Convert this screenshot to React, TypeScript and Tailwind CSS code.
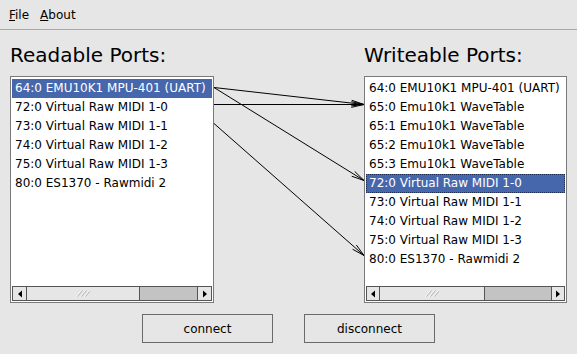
import React from 'react'

const readable = [
  '64:0 EMU10K1 MPU-401 (UART)',
  '72:0 Virtual Raw MIDI 1-0',
  '73:0 Virtual Raw MIDI 1-1',
  '74:0 Virtual Raw MIDI 1-2',
  '75:0 Virtual Raw MIDI 1-3',
  '80:0 ES1370 - Rawmidi 2',
]

const writeable = [
  '64:0 EMU10K1 MPU-401 (UART)',
  '65:0 Emu10k1 WaveTable',
  '65:1 Emu10k1 WaveTable',
  '65:2 Emu10k1 WaveTable',
  '65:3 Emu10k1 WaveTable',
  '72:0 Virtual Raw MIDI 1-0',
  '73:0 Virtual Raw MIDI 1-1',
  '74:0 Virtual Raw MIDI 1-2',
  '75:0 Virtual Raw MIDI 1-3',
  '80:0 ES1370 - Rawmidi 2',
]

// connections in svg coords (box top = 76, left box edge = 214)
const links = [
  { y1: 11, y2: 28 },
  { y1: 11, y2: 104 },
  { y1: 28, y2: 28 },
  { y1: 47, y2: 179 },
]

function Arrow({ y1, y2 }: { y1: number; y2: number }) {
  const x1 = 0
  const x2 = 150
  const ang = Math.atan2(y2 - y1, x2 - x1)
  const len = 13
  const spread = 0.22
  const a = { x: x2 - len * Math.cos(ang - spread), y: y2 - len * Math.sin(ang - spread) }
  const b = { x: x2 - len * Math.cos(ang + spread), y: y2 - len * Math.sin(ang + spread) }
  return (
    <g stroke="black" strokeWidth="1" fill="none">
      <line x1={x1} y1={y1 + 0.5} x2={x2} y2={y2 + 0.5} />
      <line x1={a.x} y1={a.y + 0.5} x2={x2} y2={y2 + 0.5} />
      <line x1={b.x} y1={b.y + 0.5} x2={x2} y2={y2 + 0.5} />
    </g>
  )
}

function ScrollBar({ thumb, trough }: { thumb: number; trough: number }) {
  return (
    <div className="flex h-[15px] border border-[#555] bg-[#c3c3c3]">
      <div className="flex w-[14px] items-center justify-center border-r border-[#555] bg-[#e6e6e6]">
        <svg width="6" height="8" viewBox="0 0 6 8">
          <path d="M1 4 L5 0.5 L5 7.5 Z" fill="black" />
        </svg>
      </div>
      <div
        className="flex items-center justify-center border-r border-[#555] bg-[#e6e6e6]"
        style={{ width: thumb }}
      >
        <svg width="14" height="7" viewBox="0 0 14 7">
          <path d="M0.5 6.5 L5.5 0.5 M4.5 6.5 L9.5 0.5 M8.5 6.5 L13.5 0.5" stroke="#fff" strokeWidth="1" />
          <path d="M1.5 6.5 L6.5 0.5 M5.5 6.5 L10.5 0.5 M9.5 6.5 L14.5 0.5" stroke="#b0b0b0" strokeWidth="1" />
        </svg>
      </div>
      <div style={{ width: trough }} />
      <div className="ml-auto flex w-[14px] items-center justify-center border-l border-[#555] bg-[#e6e6e6]">
        <svg width="6" height="8" viewBox="0 0 6 8">
          <path d="M5 4 L1 0.5 L1 7.5 Z" fill="black" />
        </svg>
      </div>
    </div>
  )
}

function PortList({
  items,
  selected,
  focused,
  width,
  thumb,
  trough,
}: {
  items: string[]
  selected: number
  focused?: boolean
  width: number
  thumb: number
  trough: number
}) {
  return (
    <div
      className="flex h-[227px] flex-col border border-[#7a7a7a] bg-white p-[1px]"
      style={{ width }}
    >
      <div className="flex-1 overflow-hidden pt-[1px]">
        {items.map((it, i) => (
          <div
            key={it + i}
            className={
              i === selected
                ? focused
                  ? 'h-[19px] whitespace-nowrap border border-dotted border-[#1c2c55] bg-[#4767ad] pl-[2px] leading-[17px] text-white'
                  : 'h-[19px] whitespace-nowrap bg-[#4767ad] pl-[3px] leading-[19px] text-white'
                : 'h-[19px] whitespace-nowrap pl-[3px] leading-[19px] text-black'
            }
          >
            {it}
          </div>
        ))}
      </div>
      <ScrollBar thumb={thumb} trough={trough} />
    </div>
  )
}

export default function App() {
  return (
    <div
      className="h-[354px] w-[577px] overflow-hidden bg-[#e6e6e6] text-[12px] text-black"
      style={{ fontFamily: '"DejaVu Sans", sans-serif' }}
    >
      {/* menu bar */}
      <div className="flex h-[30px] gap-[11px] border-b border-[#a8a8a8] px-[9px] pt-[6px] text-[12px]">
        <span>
          <span className="underline">F</span>ile
        </span>
        <span>
          <span className="underline">A</span>bout
        </span>
      </div>

      {/* titles */}
      <div className="flex h-[46px] items-center pl-[10px] pt-[3px] text-[20px]">
        <div className="w-[354px]">Readable Ports:</div>
        <div>Writeable Ports:</div>
      </div>

      {/* lists */}
      <div className="flex pl-[10px]">
        <PortList items={readable} selected={0} width={204} thumb={113} trough={57} />
        <svg width="150" height="227" className="shrink-0">
          {links.map((l, i) => (
            <Arrow key={i} y1={l.y1} y2={l.y2} />
          ))}
        </svg>
        <PortList items={writeable} selected={5} focused width={203} thumb={112} trough={70} />
      </div>

      {/* buttons */}
      <div className="mt-[11px] flex justify-center gap-[31px]">
        <button className="h-[29px] w-[131px] border border-[#6a6a6a] bg-[#e6e6e6] text-[12px]">
          connect
        </button>
        <button className="h-[29px] w-[131px] border border-[#6a6a6a] bg-[#e6e6e6] text-[12px]">
          disconnect
        </button>
      </div>
    </div>
  )
}
